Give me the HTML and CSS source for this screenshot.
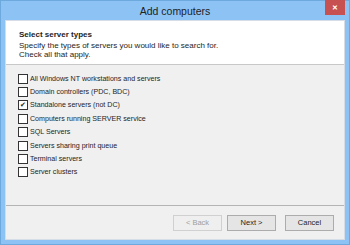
FILE: index.html
```html
<!DOCTYPE html>
<html lang="en">

<head>
    <meta charset="UTF-8">
    <title>Add computers</title>
    <link rel="stylesheet" href="styles.css">
</head>

<body>
    <div class="window">
        <div class="titlebar">
            <span class="title">Add computers</span>
            <span class="close">&#x2715;</span>
        </div>
        <div class="client">
            <div class="header">
                <div class="htitle">Select server types</div>
                <div class="htext">Specify the types of servers you would like to search for.<br>Check all that apply.</div>
            </div>
            <div class="body">
                <ul class="list">
                    <li><span class="box"></span>All Windows NT workstations and servers</li>
                    <li><span class="box"></span>Domain controllers (PDC, BDC)</li>
                    <li><span class="box checked">&#x2714;</span>Standalone servers (not DC)</li>
                    <li><span class="box"></span>Computers running SERVER service</li>
                    <li><span class="box"></span>SQL Servers</li>
                    <li><span class="box"></span>Servers sharing print queue</li>
                    <li><span class="box"></span>Terminal servers</li>
                    <li><span class="box"></span>Server clusters</li>
                </ul>
            </div>
            <div class="footer">
                <button class="btn" disabled>&lt; Back</button>
                <button class="btn next">Next &gt;</button>
                <button class="btn cancel">Cancel</button>
            </div>
        </div>
    </div>
</body>

</html>
```

FILE: styles.css
```css
html,
body {
    margin: 0;
    padding: 0;
}

body {
    font-family: "Liberation Sans", Arial, sans-serif;
    color: #1e1e1e;
}

.window {
    width: 350px;
    height: 245px;
    box-sizing: border-box;
    background-color: #8dc3f4;
    border: 1px solid #6ea9de;
    display: flex;
    flex-direction: column;
}

.titlebar {
    height: 19px;
    position: relative;
    display: flex;
    justify-content: center;
    align-items: center;
}

.title {
    font-size: 10.5px;
    color: #222;
}

.close {
    position: absolute;
    right: 4px;
    top: -1px;
    width: 20px;
    height: 15px;
    background-color: #c75050;
    color: #fff;
    font-size: 7px;
    font-weight: bold;
    display: flex;
    justify-content: center;
    align-items: center;
}

.client {
    flex: 1;
    margin: 0 4px 4px 4px;
    border: 1px solid #d6dde6;
    background-color: #f0f0f0;
    display: flex;
    flex-direction: column;
}

.header {
    height: 44px;
    background-color: #fff;
    border-bottom: 1px solid #c8c8c8;
    padding: 9px 0 0 13px;
    box-sizing: border-box;
    font-size: 8px;
    line-height: 9.5px;
}

.htitle {
    font-weight: bold;
    font-size: 8px;
    margin-bottom: 1px;
}

.body {
    flex: 1;
}

.list {
    list-style-type: none;
    margin: 0;
    padding: 7px 0 0 12px;
}

.list li {
    height: 13.4px;
    display: flex;
    align-items: center;
    font-size: 7.1px;
}

.box {
    width: 8px;
    height: 8px;
    border: 1px solid #333;
    background-color: #fff;
    margin-right: 2px;
    font-size: 7px;
    line-height: 8px;
    text-align: center;
    color: #222;
}

.footer {
    height: 33px;
    border-top: 1px solid #b4b4b4;
    display: flex;
    justify-content: flex-end;
    align-items: center;
    padding-right: 10px;
}

.btn {
    width: 49px;
    height: 16px;
    padding: 0;
    border: 1px solid #acacac;
    background-color: #e5e5e5;
    font-family: "Liberation Sans", Arial, sans-serif;
    font-size: 7.5px;
    color: #1e1e1e;
}

.btn:disabled {
    color: #a0a0a0;
    border-color: #d0d0d0;
    background-color: #efefef;
}

.next {
    margin-left: 5px;
}

.cancel {
    margin-left: 9px;
}
```
